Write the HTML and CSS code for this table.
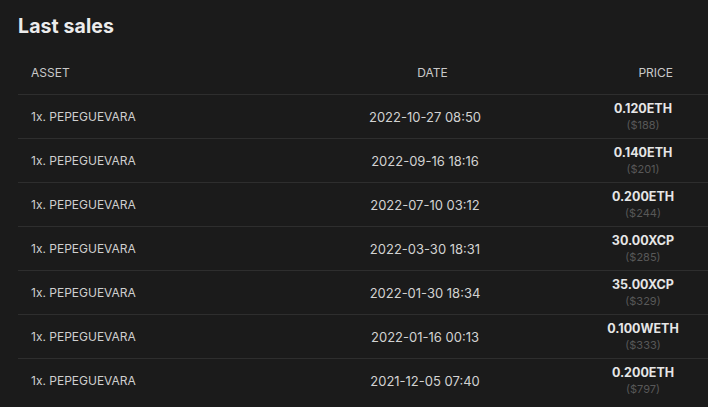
FILE: index.html
```html
<!DOCTYPE html>
<html>
<head>
<meta charset="utf-8">
<link rel="stylesheet" href="styles.css">
</head>
<body>
<div class="panel">
  <h2 class="title">Last sales</h2>
  <div class="table">
    <div class="row head">
      <div class="c-asset">ASSET</div>
      <div class="c-date">DATE</div>
      <div class="c-price">PRICE</div>
    </div>
    <div class="row">
      <div class="c-asset">1x. PEPEGUEVARA</div>
      <div class="c-date">2022-10-27 08:50</div>
      <div class="c-price"><div class="pbox"><div class="amt">0.120ETH</div><div class="usd">($188)</div></div></div>
    </div>
    <div class="row">
      <div class="c-asset">1x. PEPEGUEVARA</div>
      <div class="c-date">2022-09-16 18:16</div>
      <div class="c-price"><div class="pbox"><div class="amt">0.140ETH</div><div class="usd">($201)</div></div></div>
    </div>
    <div class="row">
      <div class="c-asset">1x. PEPEGUEVARA</div>
      <div class="c-date">2022-07-10 03:12</div>
      <div class="c-price"><div class="pbox"><div class="amt">0.200ETH</div><div class="usd">($244)</div></div></div>
    </div>
    <div class="row">
      <div class="c-asset">1x. PEPEGUEVARA</div>
      <div class="c-date">2022-03-30 18:31</div>
      <div class="c-price"><div class="pbox"><div class="amt">30.00XCP</div><div class="usd">($285)</div></div></div>
    </div>
    <div class="row">
      <div class="c-asset">1x. PEPEGUEVARA</div>
      <div class="c-date">2022-01-30 18:34</div>
      <div class="c-price"><div class="pbox"><div class="amt">35.00XCP</div><div class="usd">($329)</div></div></div>
    </div>
    <div class="row">
      <div class="c-asset">1x. PEPEGUEVARA</div>
      <div class="c-date">2022-01-16 00:13</div>
      <div class="c-price"><div class="pbox"><div class="amt">0.100WETH</div><div class="usd">($333)</div></div></div>
    </div>
    <div class="row">
      <div class="c-asset">1x. PEPEGUEVARA</div>
      <div class="c-date">2021-12-05 07:40</div>
      <div class="c-price"><div class="pbox"><div class="amt">0.200ETH</div><div class="usd">($797)</div></div></div>
    </div>
  </div>
</div>
</body>
</html>
```
FILE: styles.css
```css
html, body {
  margin: 0;
  padding: 0;
  background: #1b1b1b;
  height: 100%;
  overflow: hidden;
}
body {
  font-family: Inter, "Liberation Sans", sans-serif;
  color: #d6d6d6;
}
.panel {
  padding: 13px 0 0 18px;
}
.title {
  margin: 0;
  font-size: 19.5px;
  line-height: 27px;
  font-weight: 700;
  color: #ececec;
  letter-spacing: 0.1px;
}
.table {
  margin-top: 10px;
}
.row {
  display: grid;
  grid-template-columns: 300px 214px 1fr;
  height: 44px;
  align-items: center;
  border-top: 1px solid #2e2e2e;
  box-sizing: border-box;
  font-size: 12px;
}
.row.head {
  border-top: none;
  height: 44px;
}
.head > div {
  color: #c9c9c9;
  font-size: 12px;
}
.head > .c-date {
  padding-left: 15px;
}
.c-asset {
  padding-left: 13px;
  color: #cfcfcf;
}
.c-date {
  text-align: center;
  font-size: 13px;
  color: #d2d2d2;
}
.c-price {
  text-align: right;
  padding-right: 35px;
}
.row:not(.head) .c-price {
  display: flex;
  justify-content: flex-end;
  padding-right: 25px;
}
.pbox {
  width: 80px;
  text-align: center;
}
.amt {
  font-weight: 700;
  font-size: 12.5px;
  line-height: 16px;
  color: #e6e6e6;
  margin-top: 1px;
}
.usd {
  font-size: 11px;
  line-height: 17px;
  color: #585858;
}
```
